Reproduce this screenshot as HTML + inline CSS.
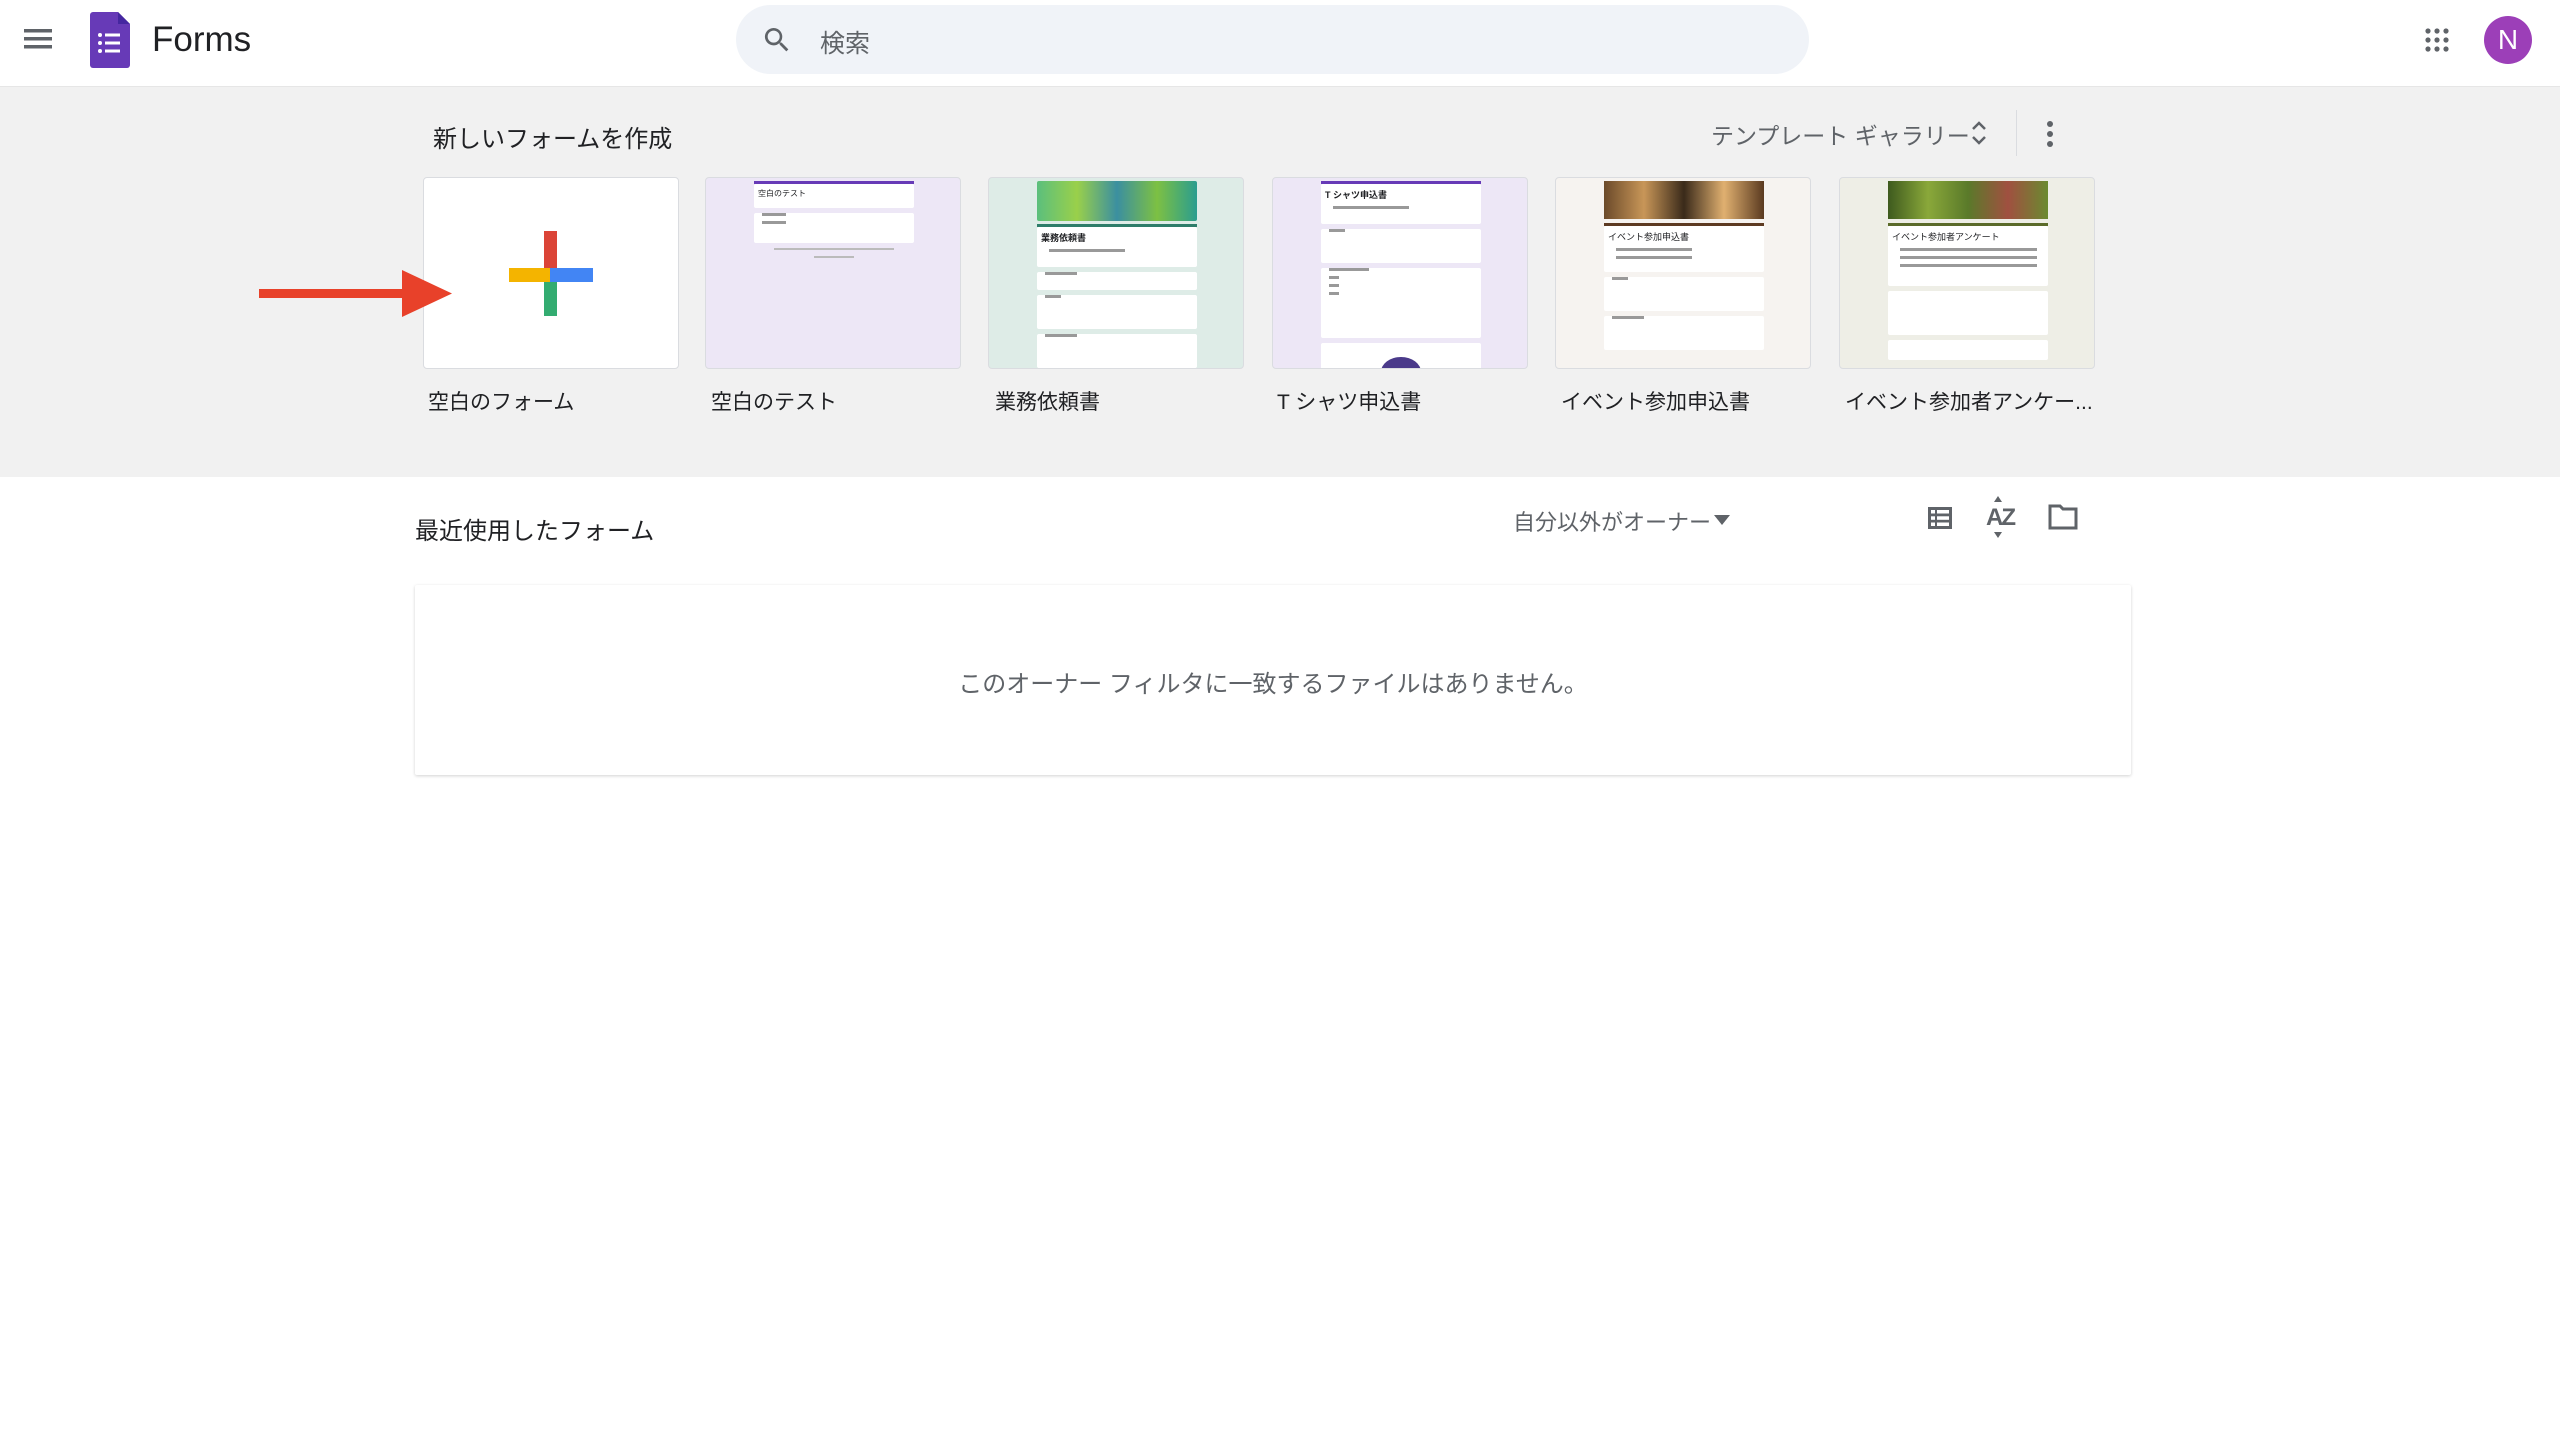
<!DOCTYPE html>
<html><head><meta charset="utf-8"><style>
*{box-sizing:border-box;margin:0;padding:0}
body{width:2560px;height:1453px;background:#fff;font-family:"Liberation Sans","Noto Sans CJK JP",sans-serif;color:#202124;position:relative;overflow:hidden}
.abs{position:absolute}
.hdr{left:0;top:0;width:2560px;height:87px;background:#fff;border-bottom:1px solid #e6e6e6}
.band{left:0;top:87px;width:2560px;height:390px;background:#f1f1f1}
.card{position:absolute;top:177px;width:256px;height:192px;border:1px solid #dadce0;border-radius:4px;overflow:hidden}
.in{position:absolute;left:48px;width:160px}
.w{background:#fff;border-radius:2px;margin-bottom:5px}
.lbl{position:absolute;top:386px;font-size:21px;color:#202124;white-space:nowrap}
.ln{height:3px;background:#999;margin:5px 8px;width:50%}
</style></head><body>
<div class="abs hdr"></div>
<!-- hamburger -->
<svg class="abs" style="left:24px;top:27px" width="28" height="24" viewBox="0 0 28 24"><rect y="2" width="28" height="3.5" fill="#5f6368"/><rect y="10" width="28" height="3.5" fill="#5f6368"/><rect y="18" width="28" height="3.5" fill="#5f6368"/></svg>
<!-- forms logo -->
<svg class="abs" style="left:90px;top:12px" width="40" height="56" viewBox="0 0 40 56"><path d="M3 0h25l12 12v41a3 3 0 0 1-3 3H3a3 3 0 0 1-3-3V3a3 3 0 0 1 3-3z" fill="#673ab7"/><path d="M28 0l12 12H28z" fill="#4527a0"/><g fill="#fff"><circle cx="10" cy="23" r="2"/><rect x="15" y="21.5" width="15" height="3"/><circle cx="10" cy="31" r="2"/><rect x="15" y="29.5" width="15" height="3"/><circle cx="10" cy="39" r="2"/><rect x="15" y="37.5" width="15" height="3"/></g></svg>
<div class="abs" style="left:152px;top:20px;font-size:35px;color:#202124">Forms</div>
<!-- search -->
<div class="abs" style="left:736px;top:5px;width:1073px;height:69px;border-radius:35px;background:#f0f3f8"></div>
<svg class="abs" style="left:761px;top:24px" width="32" height="32" viewBox="0 0 24 24"><path d="M15.5 14h-.8l-.3-.3A6.5 6.5 0 1 0 9.5 16a6.5 6.5 0 0 0 4.2-1.6l.3.3v.8l5 5 1.5-1.5-5-5zm-6 0a4.5 4.5 0 1 1 0-9 4.5 4.5 0 0 1 0 9z" fill="#5f6368"/></svg>
<div class="abs" style="left:820px;top:24px;font-size:25px;color:#5f6368">検索</div>
<!-- apps -->
<svg class="abs" style="left:2425px;top:28px" width="24" height="24" viewBox="0 0 24 24" fill="#5f6368"><circle cx="3" cy="3" r="2.6"/><circle cx="12" cy="3" r="2.6"/><circle cx="21" cy="3" r="2.6"/><circle cx="3" cy="12" r="2.6"/><circle cx="12" cy="12" r="2.6"/><circle cx="21" cy="12" r="2.6"/><circle cx="3" cy="21" r="2.6"/><circle cx="12" cy="21" r="2.6"/><circle cx="21" cy="21" r="2.6"/></svg>
<div class="abs" style="left:2484px;top:16px;width:48px;height:48px;border-radius:50%;background:#9c3fb8;color:#fff;font-size:28px;text-align:center;line-height:48px">N</div>

<div class="abs band"></div>
<div class="abs" style="left:433px;top:119px;font-size:24px;color:#202124">新しいフォームを作成</div>
<div class="abs" style="left:1711px;top:117px;font-size:23px;color:#5f6368">テンプレート ギャラリー</div>
<svg class="abs" style="left:1970px;top:119px" width="18" height="28" viewBox="0 0 18 28"><path d="M3 10l6-6 6 6M3 18l6 6 6-6" stroke="#5f6368" stroke-width="2.5" fill="none"/></svg>
<div class="abs" style="left:2016px;top:110px;width:1px;height:46px;background:#dadce0"></div>
<svg class="abs" style="left:2045px;top:120px" width="10" height="28" viewBox="0 0 10 28" fill="#5f6368"><circle cx="5" cy="4" r="3"/><circle cx="5" cy="14" r="3"/><circle cx="5" cy="24" r="3"/></svg>

<!-- card1 blank -->
<div class="card" style="left:423px;background:#fff">
 <div class="abs" style="left:120px;top:53px;width:13px;height:42px;background:#db4437"></div>
 <div class="abs" style="left:85px;top:90px;width:42px;height:14px;background:#f4b400"></div>
 <div class="abs" style="left:126px;top:90px;width:43px;height:14px;background:#4285f4"></div>
 <div class="abs" style="left:120px;top:104px;width:13px;height:34px;background:#0f9d58;opacity:.85"></div>
</div>
<!-- arrow -->
<div class="abs" style="left:259px;top:289px;width:145px;height:9px;background:#e8412a"></div>
<svg class="abs" style="left:402px;top:270px" width="50" height="47"><path d="M0 0L50 23.5 0 47z" fill="#e8412a"/></svg>

<!-- card2 -->
<div class="card" style="left:705px;background:#ede7f6">
 <div class="in" style="top:3px"><div style="height:3px;background:#673ab7"></div>
 <div class="w" style="height:24px;font-size:8px;padding:4px">空白のテスト</div>
 <div class="w" style="height:30px"><div class="ln" style="width:15%"></div><div class="ln" style="width:15%"></div></div>
 <div style="height:2px;background:#bbb;margin:4px 20px"></div><div style="height:2px;background:#bbb;margin:6px 60px"></div></div>
</div>
<!-- card3 -->
<div class="card" style="left:988px;background:#deece7">
 <div class="in" style="top:3px"><div style="height:40px;background:linear-gradient(90deg,#5bbf7d,#9ad04a,#3b8fa0,#7dc043,#2a9d8f);border-radius:2px"></div>
 <div style="height:3px;background:#2e7d6a;margin-top:3px"></div>
 <div class="w" style="height:40px;font-size:9px;padding:4px;font-weight:bold">業務依頼書<div class="ln"></div></div>
 <div class="w" style="height:18px"><div class="ln" style="width:20%"></div></div>
 <div class="w" style="height:34px"><div class="ln" style="width:10%"></div></div>
 <div class="w" style="height:34px"><div class="ln" style="width:20%"></div></div></div>
</div>
<!-- card4 -->
<div class="card" style="left:1272px;background:#ede7f6">
 <div class="in" style="top:3px"><div style="height:3px;background:#673ab7"></div>
 <div class="w" style="height:40px;font-size:9px;padding:4px;font-weight:bold">T シャツ申込書<div class="ln"></div></div>
 <div class="w" style="height:34px"><div class="ln" style="width:10%"></div></div>
 <div class="w" style="height:70px"><div class="ln" style="width:25%"></div><div class="ln" style="width:6%"></div><div class="ln" style="width:6%"></div><div class="ln" style="width:6%"></div></div>
 <div class="w" style="height:30px;position:relative"><div style="position:absolute;left:60px;top:14px;width:40px;height:30px;border-radius:50%;background:#4a3a8a"></div></div></div>
</div>
<!-- card5 -->
<div class="card" style="left:1555px;background:#f6f3f0">
 <div class="in" style="top:3px"><div style="height:38px;background:linear-gradient(90deg,#6b4a2a,#c89658,#3a2a1a,#e0b070,#5a3a20)"></div>
 <div style="height:3px;background:#5d3a22;margin-top:4px"></div>
 <div class="w" style="height:46px;font-size:9px;padding:4px">イベント参加申込書<div class="ln"></div><div class="ln"></div></div>
 <div class="w" style="height:34px"><div class="ln" style="width:10%"></div></div>
 <div class="w" style="height:34px"><div class="ln" style="width:20%"></div></div></div>
</div>
<!-- card6 -->
<div class="card" style="left:1839px;background:#eeeee6">
 <div class="in" style="top:3px"><div style="height:38px;background:linear-gradient(90deg,#3e5a1e,#8aa83a,#5a7a2a,#a05040,#6a8a30)"></div>
 <div style="height:3px;background:#5b6b2a;margin-top:4px"></div>
 <div class="w" style="height:60px;font-size:9px;padding:4px">イベント参加者アンケート<div class="ln" style="width:90%"></div><div class="ln" style="width:90%"></div><div class="ln" style="width:90%"></div></div>
 <div class="w" style="height:44px"></div>
 <div class="w" style="height:20px"></div></div>
</div>
<div class="lbl" style="left:428px">空白のフォーム</div>
<div class="lbl" style="left:711px">空白のテスト</div>
<div class="lbl" style="left:995px">業務依頼書</div>
<div class="lbl" style="left:1277px">T シャツ申込書</div>
<div class="lbl" style="left:1561px">イベント参加申込書</div>
<div class="lbl" style="left:1845px">イベント参加者アンケー...</div>

<div class="abs" style="left:415px;top:511px;font-size:24px;color:#202124">最近使用したフォーム</div>
<div class="abs" style="left:1513px;top:505px;font-size:22px;color:#5f6368">自分以外がオーナー</div>
<svg class="abs" style="left:1714px;top:515px" width="16" height="10"><path d="M0 0h16L8 10z" fill="#5f6368"/></svg>
<svg class="abs" style="left:1926px;top:504px" width="28" height="28" viewBox="0 0 28 28"><rect x="2" y="3" width="24" height="22" fill="#5f6368"/><g fill="#fff"><rect x="5" y="6" width="4" height="3.5"/><rect x="11" y="6" width="12" height="3.5"/><rect x="5" y="12.3" width="4" height="3.5"/><rect x="11" y="12.3" width="12" height="3.5"/><rect x="5" y="18.5" width="4" height="3.5"/><rect x="11" y="18.5" width="12" height="3.5"/></g></svg>
<div class="abs" style="left:1986px;top:504px;font-size:24px;color:#5f6368;font-weight:bold;letter-spacing:-2px">AZ</div>
<svg class="abs" style="left:1993px;top:496px" width="10" height="42"><path d="M5 0l4 6H1zM5 42l4-6H1z" fill="#5f6368"/></svg>
<svg class="abs" style="left:2048px;top:504px" width="30" height="26" viewBox="0 0 30 26"><path d="M2 2h10l3 3h13v19H2z" fill="none" stroke="#5f6368" stroke-width="3"/></svg>

<div class="abs" style="left:415px;top:585px;width:1716px;height:190px;background:#fff;box-shadow:0 1px 3px rgba(0,0,0,.18);border-radius:2px"></div>
<div class="abs" style="left:415px;top:664px;width:1716px;text-align:center;font-size:24px;color:#5f6368">このオーナー フィルタに一致するファイルはありません。</div>
</body></html>
